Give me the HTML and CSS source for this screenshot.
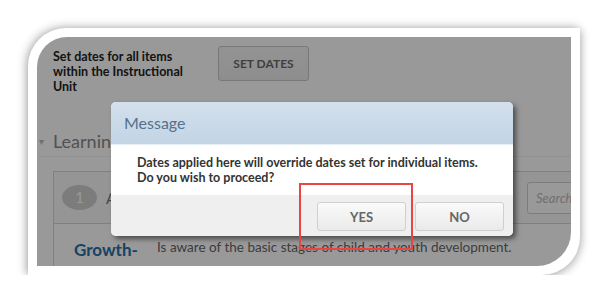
FILE: index.html
```html
<!DOCTYPE html>
<html lang="en">
<head>
  <meta charset="UTF-8">
  <title>Set Dates</title>
  <link rel="stylesheet" href="styles.css">
</head>
<body>

<div class="card">
  <div class="screen">

    <!-- Page behind the dialog -->
    <div class="page">
      <div class="dates-row">
        <p class="dates-label">Set dates for all items within the Instructional Unit</p>
        <button class="btn-set">SET DATES</button>
      </div>

      <div class="section-head">
        <span class="caret">&#9662;</span>
        <span class="section-title">Learning</span>
      </div>

      <div class="unit-box">
        <div class="unit-head">
          <span class="num">1</span>
          <span class="unit-title">Assessment</span>
          <input class="search" type="text" placeholder="Search">
        </div>
        <div class="unit-row">
          <a class="outcome" href="#">Growth-<br>Ind 01</a>
          <span class="outcome-desc">Is aware of the basic stages of child and youth development.</span>
        </div>
      </div>
    </div>

    <div class="overlay"></div>

    <!-- Confirm dialog -->
    <div class="dialog">
      <div class="dialog-head">Message</div>
      <div class="dialog-body">
        Dates applied here will override dates set for individual items.<br>
        Do you wish to proceed?
      </div>
      <div class="dialog-foot">
        <button class="btn">YES</button>
        <button class="btn">NO</button>
      </div>
    </div>

    <div class="highlight"></div>
  </div>
</div>

</body>
</html>
```

FILE: styles.css
```css
body {
  margin: 0;
  background: #ffffff;
  font-family: Lato, "Open Sans", sans-serif;
}

.card {
  width: 534px;
  height: 229px;
  margin: 28px 0 0 28px;
  padding: 9px;
  background: #ffffff;
  border-radius: 38px 0 38px 0;
  box-shadow: -2px -1px 10px rgba(0, 0, 0, 0.28), 2px 3px 8px rgba(0, 0, 0, 0.18);
}

.screen {
  position: relative;
  height: 100%;
  overflow: hidden;
  background: #ffffff;
  border-radius: 30px 0 34px 0;
}

.page {
  padding: 9px 0 0 16px;
  color: #222;
}

.dates-row {
  display: flex;
  align-items: flex-start;
}

.dates-label {
  width: 148px;
  margin: 3px 17px 0 0;
  font-size: 12.5px;
  font-weight: bold;
  line-height: 15px;
}

.btn-set {
  width: 91px;
  height: 35px;
  font-family: inherit;
  font-size: 12px;
  font-weight: bold;
  color: #6a6a6a;
  background: linear-gradient(#f6f6f6, #ececec);
  border: 1px solid #c8c8c8;
  border-radius: 3px;
}

.section-head {
  display: flex;
  align-items: center;
  margin: 32px 0 0 -14px;
  height: 30px;
  border-bottom: 1px solid #f4f4f4;
}

.caret {
  width: 14px;
  font-size: 10px;
  color: #bbb;
}

.section-title {
  font-size: 18px;
  color: #888;
}

.unit-box {
  width: 580px;
  margin-top: 14px;
  border: 1px solid #d6d6d6;
}

.unit-head {
  display: flex;
  align-items: center;
  height: 51px;
  padding-left: 8px;
  border-bottom: 1px solid #d6d6d6;
  background: #f8f8f8;
}

.num {
  width: 35px;
  height: 25px;
  line-height: 25px;
  border-radius: 50%;
  background: #cfcfcf;
  color: #ffffff;
  font-size: 15px;
  text-align: center;
}

.unit-title {
  margin-left: 9px;
  font-size: 15px;
  color: #777;
}

.search {
  width: 80px;
  height: 30px;
  margin-left: auto;
  margin-right: 9px;
  padding: 0 8px;
  border: 1px solid #d0d0d0;
  border-radius: 3px;
  font-family: inherit;
  font-size: 13px;
  font-style: italic;
}

.search::placeholder {
  color: #bbb;
}

.unit-row {
  display: flex;
  padding: 14px 0 0 20px;
  height: 40px;
}

.outcome {
  width: 83px;
  font-size: 17px;
  line-height: 24px;
  font-weight: bold;
  color: #2a6ea5;
  text-decoration: none;
}

.outcome-desc {
  font-size: 13.5px;
  color: #666;
  line-height: 18px;
}

.overlay {
  position: absolute;
  inset: 0;
  background: rgba(0, 0, 0, 0.4);
}

.dialog {
  position: absolute;
  left: 74px;
  top: 65px;
  width: 402px;
  background: #ffffff;
  border-radius: 5px;
  box-shadow: 3px 3px 5px rgba(0, 0, 0, 0.5);
  overflow: hidden;
}

.dialog-head {
  height: 42px;
  line-height: 42px;
  padding-left: 13px;
  font-size: 16px;
  color: #56718d;
  background: linear-gradient(#d3e0ec, #c2d4e5);
  border-bottom: 1px solid #e6eef5;
}

.dialog-body {
  padding: 10px 0 10px 26px;
  font-size: 12.5px;
  font-weight: bold;
  line-height: 15px;
  color: #333;
}

.dialog-foot {
  display: flex;
  justify-content: flex-end;
  gap: 9px;
  height: 41px;
  padding: 7px 9px 0 0;
  box-sizing: border-box;
  background: #efefef;
}

.btn {
  width: 89px;
  height: 29px;
  font-family: inherit;
  font-size: 13px;
  font-weight: bold;
  color: #666;
  background: linear-gradient(#fafafa, #eaeaea);
  border: 1px solid #cfcfcf;
  border-radius: 3px;
}

.highlight {
  position: absolute;
  left: 262px;
  top: 146px;
  width: 110px;
  height: 63px;
  border: 2px solid #e84545;
}
```
